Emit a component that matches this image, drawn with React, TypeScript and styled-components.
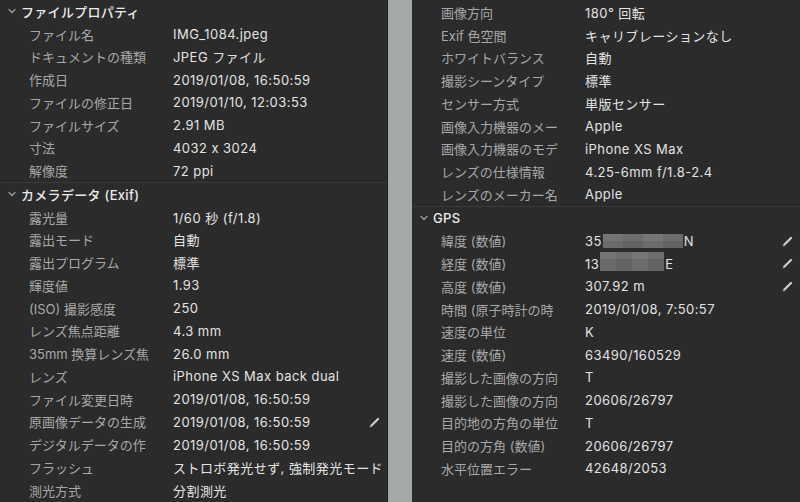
import React from "react";
import styled, { createGlobalStyle } from "styled-components";

const Global = createGlobalStyle`
  html, body { margin: 0; padding: 0; background: #2b2b2b; }
  body { font-family: "Inter", "Noto Sans CJK JP", sans-serif; -webkit-font-smoothing: antialiased; }
`;

const Page = styled.div`
  display: flex;
  width: 800px;
  height: 502px;
  overflow: hidden;
`;

const Panel = styled.div<{ $w?: number; $top?: number }>`
  ${(p) => (p.$w ? `width: ${p.$w}px; flex-shrink: 0;` : "flex: 1;")}
  min-width: 0;
  background: #2b2b2b;
  padding-top: ${(p) => p.$top ?? 0}px;
  box-sizing: border-box;
  overflow: hidden;
`;

const Gutter = styled.div`
  width: 25px;
  flex-shrink: 0;
  background: #a3aaa6;
  border-left: 1px solid #1f1f1f;
  box-sizing: border-box;
`;

const Section = styled.div<{ $divider?: boolean }>`
  border-top: ${(p) => (p.$divider ? "1px solid #3a3a3a" : "none")};
`;

const Header = styled.div`
  display: flex;
  align-items: center;
  height: 22.75px;
  padding-left: 8px;
  color: #ebebeb;
  font-size: 13px;
  font-weight: 500;
  letter-spacing: 0.3px;
  white-space: nowrap;
`;

const Chevron = styled.svg`
  width: 8px;
  height: 6px;
  margin-right: 5px;
  flex-shrink: 0;
`;

const Row = styled.div`
  position: relative;
  display: flex;
  align-items: center;
  height: 22.75px;
  font-size: 13px;
  white-space: nowrap;
`;

const Label = styled.div`
  width: 132px;
  margin-left: 29px;
  margin-right: 12px;
  flex-shrink: 0;
  overflow: hidden;
  color: #a8a8a8;
`;

const Value = styled.div`
  flex: 1;
  min-width: 0;
  display: flex;
  align-items: center;
  overflow: hidden;
  color: #e3e3e3;
  letter-spacing: 0.45px;
`;

const Pencil = styled.svg`
  position: absolute;
  right: 7px;
  top: 6px;
  width: 11px;
  height: 11px;
`;

const Mosaic = styled.span<{ $w: number; $h: number; $shift: number }>`
  display: inline-block;
  flex-shrink: 0;
  width: ${(p) => p.$w}px;
  height: ${(p) => p.$h}px;
  margin: 0 1px;
  transform: translateY(${(p) => p.$shift}px);
  background:
    linear-gradient(90deg, rgba(255,255,255,0.03) 0 25%, rgba(0,0,0,0.04) 25% 50%, rgba(255,255,255,0.04) 50% 75%, rgba(0,0,0,0.03) 75%),
    linear-gradient(180deg, #707070 0 50%, #666666 50%);
`;

type Mask = { w: number; h: number; shift: number };
type Item = { l: string; v: string; edit?: boolean; mask?: Mask; tail?: string };

const ChevronIcon = () => (
  <Chevron viewBox="0 0 8 6">
    <path d="M1 1.5 L4 4.5 L7 1.5" fill="none" stroke="#9a9a9a" strokeWidth="1.3" strokeLinecap="round" />
  </Chevron>
);

const PencilIcon = () => (
  <Pencil viewBox="0 0 11 11">
    <path d="M2 9 L9 2" stroke="#d0d0d0" strokeWidth="2.2" strokeLinecap="round" />
    <path d="M1.2 9.8 L2 9" stroke="#8a8a8a" strokeWidth="1.2" strokeLinecap="round" />
  </Pencil>
);

const Rows = ({ items }: { items: Item[] }) => (
  <>
    {items.map((it, i) => (
      <Row key={i}>
        <Label>{it.l}</Label>
        <Value>
          {it.v}
          {it.mask && <Mosaic $w={it.mask.w} $h={it.mask.h} $shift={it.mask.shift} />}
          {it.tail}
        </Value>
        {it.edit && <PencilIcon />}
      </Row>
    ))}
  </>
);

const fileProps: Item[] = [
  { l: "ファイル名", v: "IMG_1084.jpeg" },
  { l: "ドキュメントの種類", v: "JPEG ファイル" },
  { l: "作成日", v: "2019/01/08, 16:50:59" },
  { l: "ファイルの修正日", v: "2019/01/10, 12:03:53" },
  { l: "ファイルサイズ", v: "2.91 MB" },
  { l: "寸法", v: "4032 x 3024" },
  { l: "解像度", v: "72 ppi" },
];

const camera: Item[] = [
  { l: "露光量", v: "1/60 秒 (f/1.8)" },
  { l: "露出モード", v: "自動" },
  { l: "露出プログラム", v: "標準" },
  { l: "輝度値", v: "1.93" },
  { l: "(ISO) 撮影感度", v: "250" },
  { l: "レンズ焦点距離", v: "4.3 mm" },
  { l: "35mm 換算レンズ焦", v: "26.0 mm" },
  { l: "レンズ", v: "iPhone XS Max back dual" },
  { l: "ファイル変更日時", v: "2019/01/08, 16:50:59" },
  { l: "原画像データの生成", v: "2019/01/08, 16:50:59", edit: true },
  { l: "デジタルデータの作", v: "2019/01/08, 16:50:59" },
  { l: "フラッシュ", v: "ストロボ発光せず, 強制発光モード" },
  { l: "測光方式", v: "分割測光" },
];

const cameraCont: Item[] = [
  { l: "画像方向", v: "180° 回転" },
  { l: "Exif 色空間", v: "キャリブレーションなし" },
  { l: "ホワイトバランス", v: "自動" },
  { l: "撮影シーンタイプ", v: "標準" },
  { l: "センサー方式", v: "単版センサー" },
  { l: "画像入力機器のメー", v: "Apple" },
  { l: "画像入力機器のモデ", v: "iPhone XS Max" },
  { l: "レンズの仕様情報", v: "4.25-6mm f/1.8-2.4" },
  { l: "レンズのメーカー名", v: "Apple" },
];

const gps: Item[] = [
  { l: "緯度 (数値)", v: "35", mask: { w: 80, h: 14, shift: 0 }, tail: "N", edit: true },
  { l: "経度 (数値)", v: "13", mask: { w: 64, h: 24, shift: -5 }, tail: "E", edit: true },
  { l: "高度 (数値)", v: "307.92 m", edit: true },
  { l: "時間 (原子時計の時", v: "2019/01/08, 7:50:57" },
  { l: "速度の単位", v: "K" },
  { l: "速度 (数値)", v: "63490/160529" },
  { l: "撮影した画像の方向", v: "T" },
  { l: "撮影した画像の方向", v: "20606/26797" },
  { l: "目的地の方角の単位", v: "T" },
  { l: "目的の方角 (数値)", v: "20606/26797" },
  { l: "水平位置エラー", v: "42648/2053" },
];

export default function App() {
  return (
    <>
      <Global />
      <Page>
        <Panel $w={387}>
          <Section>
            <Header>
              <ChevronIcon />
              ファイルプロパティ
            </Header>
            <Rows items={fileProps} />
          </Section>
          <Section $divider>
            <Header>
              <ChevronIcon />
              カメラデータ (Exif)
            </Header>
            <Rows items={camera} />
          </Section>
        </Panel>
        <Gutter />
        <Panel $top={1}>
          <Section>
            <Rows items={cameraCont} />
          </Section>
          <Section $divider>
            <Header>
              <ChevronIcon />
              GPS
            </Header>
            <Rows items={gps} />
          </Section>
        </Panel>
      </Page>
    </>
  );
}
